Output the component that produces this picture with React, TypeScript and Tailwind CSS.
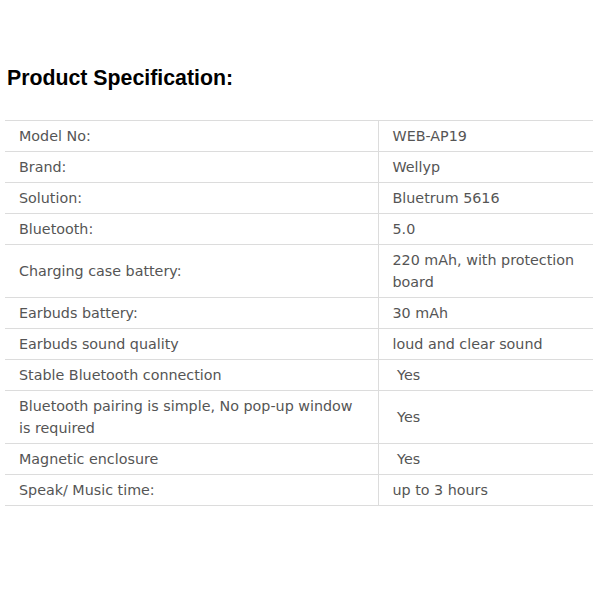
const rows: [string, string][] = [
  ["Model No:", "WEB-AP19"],
  ["Brand:", "Wellyp"],
  ["Solution:", "Bluetrum 5616"],
  ["Bluetooth:", "5.0"],
  ["Charging case battery:", "220 mAh, with protection board"],
  ["Earbuds battery:", "30 mAh"],
  ["Earbuds sound quality", "loud and clear sound"],
  ["Stable Bluetooth connection", "\u00a0Yes"],
  ["Bluetooth pairing is simple, No pop-up window is required", "\u00a0Yes"],
  ["Magnetic enclosure", "\u00a0Yes"],
  ["Speak/ Music time:", "up to 3 hours"],
];

export default function App() {
  return (
    <div className="w-[600px] h-[600px] bg-white pt-[64px] px-[5px]">
      <h2 className="font-['Liberation_Sans',Arial,sans-serif] font-bold text-[21.3px] leading-[28px] text-black pl-[2px]">
        Product Specification:
      </h2>
      <table className="mt-[28px] w-[588px] border-collapse font-['DejaVu_Sans',Verdana,sans-serif] text-[14.3px] leading-[22px] text-[#555]">
        <tbody>
          {rows.map(([k, v]) => (
            <tr key={k} className="border-t border-b border-[#dcdcdc]">
              <td className="w-[373px] pl-[14px] pr-[24px] py-[4px] align-middle border-r border-[#dcdcdc]">{k}</td>
              <td className="pl-[14px] pr-[10px] py-[4px] align-middle">{v}</td>
            </tr>
          ))}
        </tbody>
      </table>
    </div>
  );
}
